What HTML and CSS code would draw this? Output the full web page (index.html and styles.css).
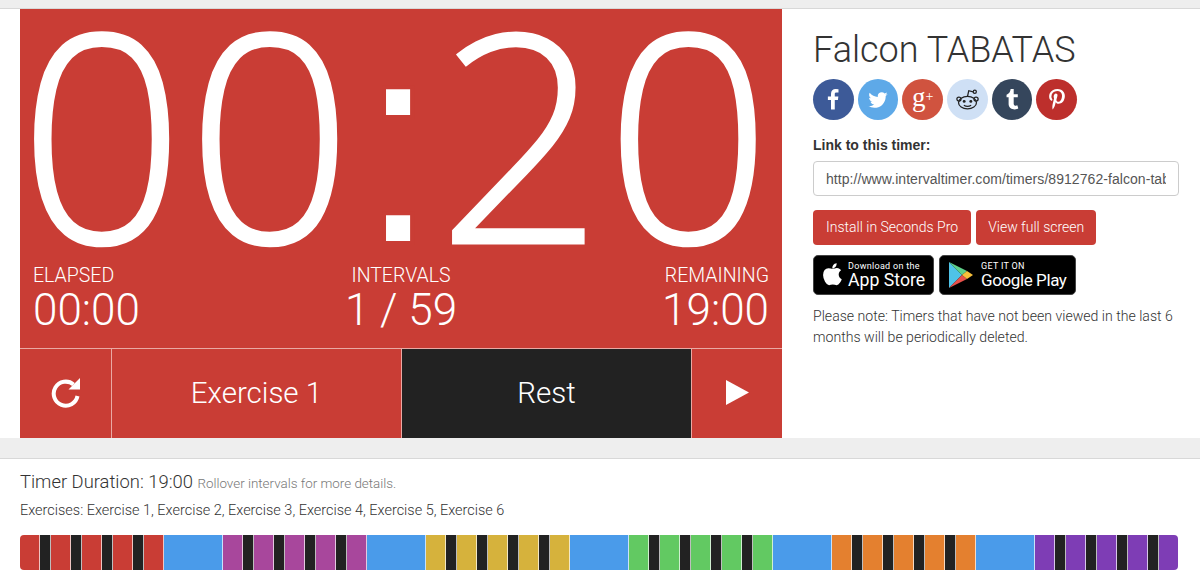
FILE: index.html
```html
<!DOCTYPE html>
<html lang="en">
<head>
<meta charset="UTF-8">
<meta name="viewport" content="width=device-width, initial-scale=1.0">
<title>Falcon TABATAS</title>
<link rel="stylesheet" href="styles.css">
</head>
<body>

<div class="band band-top"></div>

<div class="main">
  <div class="timer">
    <div class="clock">00<span class="clock-sep">:</span>20</div>
    <div class="stats">
      <div class="stat">
        <div class="stat-label">ELAPSED</div>
        <div class="stat-value">00:00</div>
      </div>
      <div class="stat stat-center">
        <div class="stat-label">INTERVALS</div>
        <div class="stat-value">1 / 59</div>
      </div>
      <div class="stat stat-right">
        <div class="stat-label">REMAINING</div>
        <div class="stat-value">19:00</div>
      </div>
    </div>
    <div class="controls">
      <div class="control">
        <svg class="icon-repeat" viewBox="0 0 30 30"><path fill="none" stroke="#fff" stroke-width="4" d="M26.500 18A12 12 0 1 1 22.500 6.500"/><path fill="#fff" d="M29 0V11.500H17.500Z"/></svg>
      </div>
      <div class="control">Exercise 1</div>
      <div class="control control-dark">Rest</div>
      <div class="control">
        <svg class="icon-play" viewBox="0 0 24 26"><path fill="#fff" d="M0 0L24 13L0 26Z"/></svg>
      </div>
    </div>
  </div>

  <div class="side">
    <h1 class="title">Falcon TABATAS</h1>
    <div class="social">
      <span class="circle fb"><svg viewBox="0 0 1792 1792"><path fill="#fff" d="M1343 12v264h-157q-86 0-116 36t-30 108v189h293l-39 296h-254v759h-306v-759h-255v-296h255v-218q0-186 104-288.500t277-102.500q147 0 228 12z"/></svg></span>
      <span class="circle tw"><svg viewBox="0 0 1792 1792"><path fill="#fff" d="M1684 408q-67 98-162 167 1 14 1 42 0 130-38 259.500t-115.500 248.500-184.500 210.500-258 146-323 54.500q-271 0-496-145 35 4 78 4 225 0 401-138-105-2-188-64.500t-114-159.500q33 5 61 5 43 0 85-11-112-23-185.500-111.500t-73.500-205.500v-4q68 38 146 41-66-44-105-115t-39-154q0-88 44-163 121 149 294.500 238.500t371.500 99.500q-8-38-8-74 0-134 94.500-228.500t228.500-94.500q140 0 236 102 109-21 205-78-37 115-142 178 92-10 184-50z"/></svg></span>
      <span class="circle gp">g<span class="gp-plus">+</span></span>
      <span class="circle rd"><svg class="icon-reddit" viewBox="0 0 24 24" fill="none" stroke="#222" stroke-width="1.2"><ellipse cx="12" cy="15" rx="8.6" ry="6"/><circle cx="3.8" cy="11.6" r="2"/><circle cx="20.200" cy="11.6" r="2"/><path d="M12 9L13.200 3.600L17.400 4.600"/><circle cx="19" cy="4.600" r="1.500"/><circle cx="8.800" cy="13.800" r="1.400" fill="#222" stroke="none"/><circle cx="15.200" cy="13.800" r="1.400" fill="#222" stroke="none"/><path d="M8.500 17.600Q12 19.800 15.500 17.600"/></svg></span>
      <span class="circle tb"><svg viewBox="0 0 1792 1792"><path fill="#fff" d="M1328 1329l80 237q-23 35-111 66t-177 32q-104 2-190.500-26t-142.500-74-95-106-55.500-120-16.500-118v-544h-168v-215q72-26 129-69.500t91-90 58-102 34-99 15-88.500q1-5 4.500-8.500t7.500-3.500h244v424h333v252h-334v518q0 30 6.500 56t22.500 52.500 49.500 41.500 81.500 14q78-2 134-29z"/></svg></span>
      <span class="circle pn"><svg viewBox="0 0 1792 1792"><path fill="#fff" d="M256 597q0-108 37.500-203.500t103.500-166.500 152-123 185-78 202-26q158 0 294 66.500t221 193.500 85 287q0 96-19 188t-60 177-100 149.500-145 103-189 38.500q-68 0-135-32t-96-88q-10 39-28 112.500t-23.500 95-20.500 71-26 71-32 62.500-46 77.500-62 86.500l-14 5-9-10q-15-157-15-188 0-92 21.500-206.500t66.500-287.500 52-203q-32-65-32-169 0-83 52-156t132-73q61 0 95 40.500t34 102.500q0 66-44 191t-44 187q0 63 45 104.500t109 41.500q55 0 102-25t78.500-68 56-95 38-110.500 20-111 6.500-99.500q0-173-109.500-269.500t-285.500-96.500q-200 0-334 129.500t-134 328.500q0 44 12.500 85t27 65 27 45.500 12.500 30.500q0 28-15 73t-37 45q-2 0-17-3-51-15-90.500-56t-61-94.500-32.500-108-11-106.500z"/></svg></span>
    </div>

    <label class="link-label" for="timer-link">Link to this timer:</label>
    <input class="link-input" id="timer-link" type="text" value="http://www.intervaltimer.com/timers/8912762-falcon-tabatas">

    <div class="buttons">
      <a class="button">Install in Seconds Pro</a>
      <a class="button">View full screen</a>
    </div>

    <div class="badges">
      <div class="badge badge-apple">
        <svg class="icon-apple" viewBox="0 0 1408 1792"><path fill="#fff" d="M1393 1215q-39 125-123 250-129 196-257 196-49 0-140-32-86-32-151-32-61 0-142 33-81 34-132 34-152 0-301-259-147-261-147-503 0-228 113-374 112-144 284-144 72 0 177 30 104 30 138 30 45 0 143-34 102-34 173-34 119 0 213 65 52 36 104 100-79 67-114 118-65 94-65 207 0 124 69 223t158 126zm-376-1173q0 61-29 136-30 75-93 138-54 54-108 72-37 11-104 17 3-149 78-257 74-107 250-126 1 3 2.500 11t2.500 11q0 2 .5 11t.5 11z"/></svg>
        <div class="badge-text">
          <div class="badge-small">Download on the</div>
          <div class="badge-big">App Store</div>
        </div>
      </div>
      <div class="badge badge-google">
        <svg class="icon-gplay" viewBox="0 0 24 26">
          <path fill="#4fc3e8" d="M0 0L13 13L0 26Z"/>
          <path fill="#5fd08a" d="M0 0L18 9L13 13Z"/>
          <path fill="#e8504a" d="M0 26L18 17L13 13Z"/>
          <path fill="#f8c03a" d="M18 9L24 13L18 17L13 13Z"/>
        </svg>
        <div class="badge-text">
          <div class="badge-small">GET IT ON</div>
          <div class="badge-big badge-big-tight">Google Play</div>
        </div>
      </div>
    </div>

    <p class="note">Please note: Timers that have not been viewed in the last 6 months will be periodically deleted.</p>
  </div>
</div>

<div class="band band-mid"></div>

<div class="details">
  <div class="duration">Timer Duration: 19:00 <small class="hint">Rollover intervals for more details.</small></div>
  <div class="exercises">Exercises: Exercise 1, Exercise 2, Exercise 3, Exercise 4, Exercise 5, Exercise 6</div>

  <div class="bar">
    <i class="work red"></i><i class="rest"></i><i class="work red"></i><i class="rest"></i><i class="work red"></i><i class="rest"></i><i class="work red"></i><i class="rest"></i><i class="work red"></i>
    <i class="long"></i>
    <i class="work pink"></i><i class="rest"></i><i class="work pink"></i><i class="rest"></i><i class="work pink"></i><i class="rest"></i><i class="work pink"></i><i class="rest"></i><i class="work pink"></i>
    <i class="long"></i>
    <i class="work yellow"></i><i class="rest"></i><i class="work yellow"></i><i class="rest"></i><i class="work yellow"></i><i class="rest"></i><i class="work yellow"></i><i class="rest"></i><i class="work yellow"></i>
    <i class="long"></i>
    <i class="work green"></i><i class="rest"></i><i class="work green"></i><i class="rest"></i><i class="work green"></i><i class="rest"></i><i class="work green"></i><i class="rest"></i><i class="work green"></i>
    <i class="long"></i>
    <i class="work orange"></i><i class="rest"></i><i class="work orange"></i><i class="rest"></i><i class="work orange"></i><i class="rest"></i><i class="work orange"></i><i class="rest"></i><i class="work orange"></i>
    <i class="long"></i>
    <i class="work purple"></i><i class="rest"></i><i class="work purple"></i><i class="rest"></i><i class="work purple"></i><i class="rest"></i><i class="work purple"></i><i class="rest"></i><i class="work purple"></i>
  </div>
</div>

</body>
</html>
```

FILE: styles.css
```css
html, body {
  overflow: hidden;
}

body {
  margin: 0;
  padding: 0;
  height: 580px;
  background-color: #fff;
  color: #333;
  font-family: Roboto, "Liberation Sans", Arial, sans-serif;
  font-size: 14px;
}

.band {
  background-color: #eee;
  border-bottom: 1px solid #d8d8d8;
}

.band-top {
  height: 8px;
}

.band-mid {
  height: 20px;
}

.main {
  display: flex;
  height: 429px;
  padding-left: 20px;
}

/* timer panel */
.timer {
  display: flex;
  flex-direction: column;
  width: 762px;
  background-color: #c93d35;
  color: #fff;
  font-weight: 300;
}

.clock {
  height: 252px;
  margin-left: -1px;
  font-family: "Open Sans", "Liberation Sans", sans-serif;
  font-size: 290px;
  font-weight: 300;
  letter-spacing: 2.500px;
  line-height: 243px;
  white-space: nowrap;
  -webkit-text-stroke: 3px #fff;
}

.clock-sep {
  margin: 0 -4px 0 2px;
  font-family: "Liberation Sans", Arial, sans-serif;
  font-size: 295px;
  font-weight: 400;
  -webkit-text-stroke: 4px #c93d35;
}

.stats {
  display: flex;
  justify-content: space-between;
  height: 87px;
  padding: 0 13px;
  border-bottom: 1px solid #eaa9a4;
}

.stat {
  flex: 1;
}

.stat-center {
  text-align: center;
}

.stat-right {
  text-align: right;
}

.stat-label {
  padding-top: 2px;
  font-size: 19.500px;
  line-height: 25px;
}

.stat-value {
  font-size: 44px;
  line-height: 44px;
}

.controls {
  flex: 1;
  display: grid;
  grid-template-columns: 92px 290px 290px 90px;
}

.control {
  display: flex;
  align-items: center;
  justify-content: center;
  padding-bottom: 2px;
  border-right: 1px solid #eaa9a4;
  font-size: 29.500px;
}

.control:last-child {
  border-right: none;
}

.control-dark {
  background-color: #222;
}

.icon-repeat {
  width: 30px;
  height: 30px;
}

.icon-play {
  width: 23px;
  height: 25px;
}

/* right column */
.side {
  flex: 1;
  padding: 0 16px 0 31px;
}

.title {
  margin: 20px 0 0;
  font-size: 36px;
  font-weight: 300;
  line-height: 42px;
}

.social {
  display: flex;
  gap: 4.200px;
  margin-top: 8px;
}

.circle {
  display: flex;
  align-items: center;
  justify-content: center;
  width: 40.500px;
  height: 41px;
  border-radius: 50%;
}

.circle svg {
  width: 22px;
  height: 22px;
}

.circle .icon-reddit {
  width: 25px;
  height: 25px;
}

.fb { background-color: #3d5a98; }
.tw { background-color: #5ea9e8; }
.rd { background-color: #cfe0f5; }
.tb { background-color: #35465c; }
.pn { background-color: #bd2f2c; }

.gp {
  padding-bottom: 5px;
  box-sizing: border-box;
  background-color: #d0533f;
  color: #fff;
  font-family: "Liberation Serif", serif;
  font-size: 27px;
  line-height: 1;
}

.gp-plus {
  font-size: 14px;
}

.link-label {
  display: block;
  margin-top: 16px;
  font-family: "Liberation Sans", Arial, sans-serif;
  font-weight: bold;
  line-height: 18px;
}

.link-input {
  display: block;
  box-sizing: border-box;
  width: 366px;
  height: 35px;
  margin-top: 7px;
  padding: 0 12px;
  border: 1px solid #ccc;
  border-radius: 4px;
  color: #555;
  font-family: "Liberation Sans", Arial, sans-serif;
  font-size: 14px;
  letter-spacing: 0.06px;
}

.buttons {
  display: flex;
  gap: 5px;
  margin-top: 14px;
}

.button {
  padding: 0 13px;
  border-radius: 4px;
  background-color: #c93d35;
  color: #fff;
  font-size: 14px;
  font-weight: 300;
  line-height: 35px;
}

.button + .button {
  padding: 0 12px;
}

.badges {
  display: flex;
  gap: 5px;
  margin-top: 10px;
}

.badge {
  display: flex;
  align-items: center;
  box-sizing: border-box;
  height: 40px;
  padding-left: 9px;
  border: 1px solid #444;
  border-radius: 5px;
  background-color: #000;
  color: #fff;
  white-space: nowrap;
}

.badge-apple {
  width: 121px;
  gap: 6px;
}

.badge-google {
  width: 137px;
  gap: 8px;
}

.icon-apple {
  width: 19px;
  height: 24px;
}

.icon-gplay {
  width: 24px;
  height: 26px;
}

.badge-small {
  font-size: 9px;
  line-height: 10px;
  letter-spacing: 0.3px;
}

.badge-big {
  font-size: 17.700px;
  line-height: 19px;
}

.badge-big-tight {
  font-size: 17px;
  letter-spacing: -0.4px;
}

.note {
  margin: 11px 0 0;
  color: #333;
  font-size: 14.100px;
  font-weight: 300;
  line-height: 21px;
}

/* bottom part */
.details {
  padding: 11px 22px 0 20px;
}

.duration {
  font-size: 18.400px;
  font-weight: 300;
  line-height: 24px;
}

.hint {
  color: #777;
  font-size: 13.400px;
}

.exercises {
  margin-top: 3px;
  font-size: 14.460px;
  font-weight: 300;
  line-height: 24px;
}

.bar {
  display: flex;
  height: 35px;
  margin-top: 12px;
  border-radius: 4px;
  overflow: hidden;
}

.bar i {
  box-sizing: border-box;
  border-right: 1px solid rgba(255, 255, 255, 0.7);
}

.bar i:last-child {
  border-right: none;
}

.work { flex: 20 1 0; }
.rest { flex: 10 1 0; background-color: #222; }
.long { flex: 60 1 0; background-color: #4a9bea; }

.red { background-color: #c93d35; }
.pink { background-color: #a8479c; }
.yellow { background-color: #d6b23c; }
.green { background-color: #62c962; }
.orange { background-color: #e4802f; }
.purple { background-color: #7e3db5; }
```
